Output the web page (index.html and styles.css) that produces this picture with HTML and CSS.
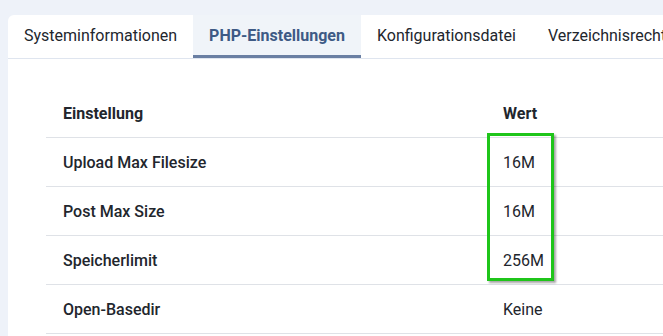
FILE: index.html
```html
<!DOCTYPE html>
<html lang="de">
<head>
<meta charset="utf-8">
<title>Systeminformationen</title>
<link rel="stylesheet" href="styles.css">
</head>
<body>
<div class="card">

<ul class="tabs">
<li class="tab">Systeminformationen</li>
<li class="tab active">PHP-Einstellungen</li>
<li class="tab">Konfigurationsdatei</li>
<li class="tab">Verzeichnisrechte</li>
</ul>

<div class="table_box">
<table class="settings">
<thead>
<tr><th class="col_name">Einstellung</th><th>Wert</th></tr>
</thead>
<tbody>
<tr><td class="col_name">Upload Max Filesize</td><td>16M</td></tr>
<tr><td class="col_name">Post Max Size</td><td>16M</td></tr>
<tr><td class="col_name">Speicherlimit</td><td>256M</td></tr>
<tr><td class="col_name">Open-Basedir</td><td>Keine</td></tr>
</tbody>
</table>
<div class="highlight"></div>
</div>

</div><!--card end-->
</body>
</html>
```

FILE: styles.css
```css
html, body{
	margin:0;
	height:100%;
	overflow:hidden;
}
body{
	background-color:#eef2f9;
	font-family:Roboto, "Liberation Sans", sans-serif;
	font-size:16px;
	color:#22262d;
	padding:15px 0 0 8px;
	box-sizing:border-box;
}
.card{
	background-color:#fff;
	border-radius:6px 0 0 0;
	height:100%;
	overflow:hidden;
}
.tabs{
	list-style:none;
	margin:0;
	padding:0;
	display:flex;
	border-bottom:1px solid #dfe5ef;
	white-space:nowrap;
}
.tab{
	padding:0 16px;
	height:40px;
	line-height:41px;
	border-bottom:3px solid transparent;
}
.tab.active{
	background-color:#f0f4f9;
	border-bottom-color:#6a7fa3;
	color:#3e5a85;
	font-weight:700;
}
.table_box{
	position:relative;
	margin:30px 0 0 38px;
}
.settings{
	border-collapse:collapse;
	width:100%;
}
.settings th, .settings td{
	text-align:left;
	height:48px;
	padding:0 17px;
	border-bottom:1px solid #dfe2e7;
	font-weight:400;
}
.settings th{
	font-weight:700;
}
.settings td.col_name{
	font-weight:500;
}
.col_name{
	width:406px;
}
.highlight{
	position:absolute;
	left:441px;
	top:44px;
	width:61px;
	height:142px;
	border:3px solid #1fc51a;
	box-shadow:2px 2px 2px rgba(0,0,0,0.35);
}
```
